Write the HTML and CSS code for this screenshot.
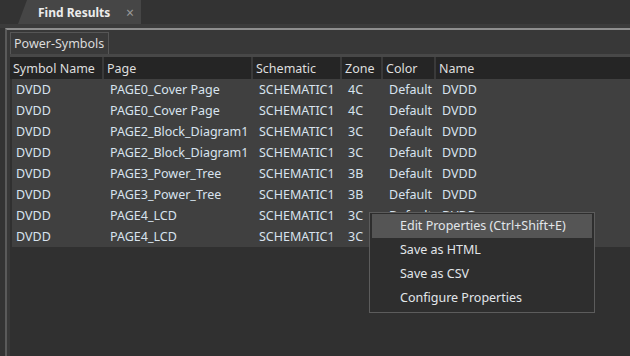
FILE: index.html
```html
<!DOCTYPE html>
<html lang="en">
<head>
    <meta charset="UTF-8">
    <title>Find Results</title>
    <link rel="stylesheet" href="styles.css">
</head>
<body>
    <div class="tabbar">
        <div class="tab">
            <span class="tab-title">Find Results</span>
            <span class="tab-close">×</span>
        </div>
    </div>
    <div class="tabbar-edge"></div>

    <div class="frame">
        <div class="subtabs">
            <div class="subtab">Power-Symbols</div>
        </div>
        <div class="pane">
            <div class="grid head">
                <div class="hcell">Symbol Name</div>
                <div class="hcell">Page</div>
                <div class="hcell">Schematic</div>
                <div class="hcell">Zone</div>
                <div class="hcell">Color</div>
                <div class="hcell">Name</div>
            </div>
            <div class="rows">
                <div class="grid row"><span>DVDD</span><span>PAGE0_Cover Page</span><span>SCHEMATIC1</span><span>4C</span><span>Default</span><span>DVDD</span></div>
                <div class="grid row"><span>DVDD</span><span>PAGE0_Cover Page</span><span>SCHEMATIC1</span><span>4C</span><span>Default</span><span>DVDD</span></div>
                <div class="grid row"><span>DVDD</span><span>PAGE2_Block_Diagram1</span><span>SCHEMATIC1</span><span>3C</span><span>Default</span><span>DVDD</span></div>
                <div class="grid row"><span>DVDD</span><span>PAGE2_Block_Diagram1</span><span>SCHEMATIC1</span><span>3C</span><span>Default</span><span>DVDD</span></div>
                <div class="grid row"><span>DVDD</span><span>PAGE3_Power_Tree</span><span>SCHEMATIC1</span><span>3B</span><span>Default</span><span>DVDD</span></div>
                <div class="grid row"><span>DVDD</span><span>PAGE3_Power_Tree</span><span>SCHEMATIC1</span><span>3B</span><span>Default</span><span>DVDD</span></div>
                <div class="grid row"><span>DVDD</span><span>PAGE4_LCD</span><span>SCHEMATIC1</span><span>3C</span><span>Default</span><span>DVDD</span></div>
                <div class="grid row"><span>DVDD</span><span>PAGE4_LCD</span><span>SCHEMATIC1</span><span>3C</span><span>Default</span><span>DVDD</span></div>
            </div>
        </div>
    </div>

    <div class="menu">
        <div class="menu-item active">Edit Properties (Ctrl+Shift+E)</div>
        <div class="menu-item">Save as HTML</div>
        <div class="menu-item">Save as CSV</div>
        <div class="menu-item">Configure Properties</div>
    </div>
</body>
</html>
```

FILE: styles.css
```css
:root {
    --bg: #333333;
    --frame-bg: #383838;
    --row-bg: #404040;
    --head-bg: #252525;
    --row-text: #d8e3ee;
    --head-text: #dedede;
}

html, body {
    height: 100%;
}

body {
    margin: 0;
    background: var(--bg);
    font-family: 'Noto Sans', sans-serif;
    font-size: 12.5px;
    color: var(--head-text);
    display: flex;
    flex-direction: column;
    overflow: hidden;
    position: relative;
}

.tabbar {
    height: 24px;
    display: flex;
    padding-left: 18px;
}
.tab {
    width: 123px;
    height: 24px;
    background: #464646;
    clip-path: polygon(9px 0, 100% 0, 100% 100%, 0 100%);
    display: flex;
    align-items: center;
    box-sizing: border-box;
    padding-left: 20px;
}
.tab-title {
    font-weight: bold;
    color: #ececec;
    font-size: 12px;
}
.tab-close {
    margin-left: auto;
    margin-right: 7px;
    color: #9a9a9a;
    font-size: 14px;
}
.tabbar-edge {
    height: 4px;
    background: #3b3b3b;
}

.frame {
    flex: 1;
    margin-left: 5px;
    border-top: 2px solid #8e8e8e;
    border-left: 2px solid #5a5a5a;
    background: var(--frame-bg);
    padding: 2px 0 0 3px;
    display: flex;
    flex-direction: column;
}

.subtabs {
    display: flex;
    height: 22px;
}
.subtab {
    border: 1px solid #565656;
    border-bottom: none;
    background: #3a3a3a;
    padding: 0 4px 0 3px;
    line-height: 22px;
    color: #dcdcdc;
}

.pane {
    flex: 1;
    border-top: 3px solid #484848;
    background: #303030;
}

.grid {
    display: grid;
    grid-template-columns: 94px 149px 89px 41px 53px 1fr;
}

.head {
    height: 22px;
    background: #3a3a3a;
}
.hcell {
    background: var(--head-bg);
    margin-right: 2px;
    padding-left: 3px;
    line-height: 23px;
    color: var(--head-text);
    white-space: nowrap;
    overflow: hidden;
}
.hcell:last-child {
    margin-right: 0;
}

.rows {
    margin-left: 2px;
    background: var(--row-bg);
}
.row {
    height: 21px;
    line-height: 22px;
    color: var(--row-text);
    margin-left: -2px;
}
.row span {
    padding-left: 6px;
    white-space: nowrap;
}

.menu {
    position: absolute;
    left: 369px;
    top: 212px;
    width: 220px;
    padding: 1px 2px 2px 2px;
    background: #2e2e2e;
    border: 1px solid #5c5c5c;
    box-sizing: content-box;
    z-index: 10;
}
.menu-item {
    height: 24px;
    line-height: 24px;
    padding-left: 28px;
    color: #e2e6ea;
    white-space: nowrap;
}
.menu-item.active {
    background: #555555;
}
```
